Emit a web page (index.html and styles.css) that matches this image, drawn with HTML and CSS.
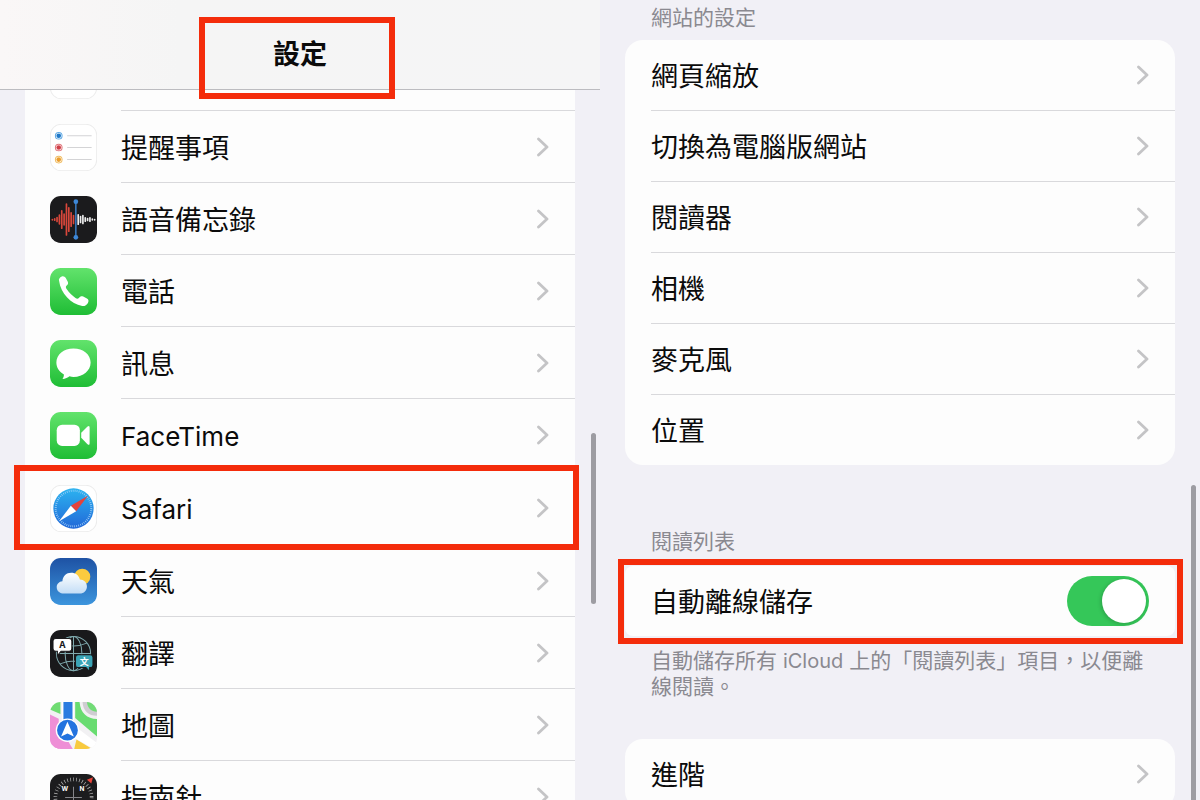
FILE: index.html
```html
<!DOCTYPE html>
<html lang="zh-Hant">

<head>
    <meta charset="UTF-8" />
    <meta name="viewport" content="width=device-width, initial-scale=1.0" />
    <title>設定</title>
    <link rel="stylesheet" href="styles.css">
</head>

<body>
    <svg class="defs" aria-hidden="true">
        <defs>
            <linearGradient id="green" x1="0" y1="0" x2="0" y2="1">
                <stop offset="0" stop-color="#62e36c" />
                <stop offset="1" stop-color="#1fbd35" />
            </linearGradient>
            <linearGradient id="sky" x1="0" y1="0" x2="0" y2="1">
                <stop offset="0" stop-color="#1e52a4" />
                <stop offset="1" stop-color="#3c95dd" />
            </linearGradient>
            <linearGradient id="dial" x1="0" y1="0" x2="0" y2="1">
                <stop offset="0" stop-color="#2cb3f0" />
                <stop offset="1" stop-color="#2168d8" />
            </linearGradient>
            <linearGradient id="cloud" x1="0" y1="0" x2="0" y2="1">
                <stop offset="0" stop-color="#ffffff" />
                <stop offset="1" stop-color="#c3ddf6" />
            </linearGradient>
            <clipPath id="tile"><rect width="140" height="140" rx="32" /></clipPath>
        </defs>
        <symbol id="chevron" viewBox="0 0 12 20">
            <path d="M1.5 2 L10 10 L1.5 18" fill="none" stroke="#c4c4c6" stroke-width="2.8" stroke-linecap="round" stroke-linejoin="round" />
        </symbol>
    </svg>

    <main class="screens">
        <section class="screen">
            <header class="navbar">
                <h1 class="title marked">設定</h1>
            </header>
            <nav class="app-list">
                <a class="app-row" href="#" aria-label="備忘錄">
                    <svg class="icon" viewBox="0 0 140 140"><rect x="1" y="1" width="138" height="138" rx="32" fill="#fff" stroke="#ececec" stroke-width="3" /></svg>
                    <span class="cell"></span>
                </a>
                <a class="app-row" href="#">
                    <svg class="icon" viewBox="0 0 140 140">
                        <rect x="1" y="1" width="138" height="138" rx="32" fill="#fff" stroke="#ececec" stroke-width="3" />
                        <g fill="none" stroke-width="3">
                            <circle cx="26" cy="35" r="10" stroke="#5fa9e4" />
                            <circle cx="26" cy="70" r="10" stroke="#e0787d" />
                            <circle cx="26" cy="106" r="10" stroke="#f0bd62" />
                        </g>
                        <circle cx="26" cy="35" r="7" fill="#1e78c8" />
                        <circle cx="26" cy="70" r="7" fill="#d03f48" />
                        <circle cx="26" cy="106" r="7" fill="#eb9e2e" />
                        <path d="M51 35H124M51 70H124M51 106H124" stroke="#d4d4d6" stroke-width="3" />
                    </svg>
                    <span class="cell"><span class="label">提醒事項</span><svg class="chevron"><use href="#chevron" /></svg></span>
                </a>
                <a class="app-row" href="#">
                    <svg class="icon" viewBox="0 0 140 140">
                        <rect width="140" height="140" rx="32" fill="#1b1b1d" />
                        <g stroke-width="5" stroke-linecap="round">
                            <path d="M7 70V71M14 68V72M21 64V76M28 57V83M35 44V96M42 54V86M49 24V116M56 35V105M63 50V90M70 58V82" stroke="#d9473b" />
                            <path d="M84 56V84M91 61V79M98 58V82M105 65V75M112 67V73M119 65V75M126 69V71M133 70V71" stroke="#eee" />
                        </g>
                        <path d="M77 17V123" stroke="#3d88d8" stroke-width="4" />
                        <circle cx="77" cy="17" r="7" fill="#3d88d8" />
                        <circle cx="77" cy="123" r="7" fill="#3d88d8" />
                    </svg>
                    <span class="cell"><span class="label">語音備忘錄</span><svg class="chevron"><use href="#chevron" /></svg></span>
                </a>
                <a class="app-row" href="#">
                    <svg class="icon" viewBox="0 0 140 140">
                        <rect width="140" height="140" rx="32" fill="url(#green)" />
                        <path d="M27 38C25 33 29 28 35 25C40 23 44 25 47 30L53 41C55 46 54 49 49 53C46 56 47 59 50 63C57 73 66 82 76 89C80 92 83 92 86 89C90 84 94 83 99 85L110 91C115 94 116 98 113 104C109 111 103 114 96 113C62 107 32 76 27 38Z" fill="#fff" />
                    </svg>
                    <span class="cell"><span class="label">電話</span><svg class="chevron"><use href="#chevron" /></svg></span>
                </a>
                <a class="app-row" href="#">
                    <svg class="icon" viewBox="0 0 140 140">
                        <rect width="140" height="140" rx="32" fill="url(#green)" />
                        <path d="M70 25C41 25 19 43 19 67C19 82 27 94 41 102C42 108 40 112 37 116C46 116 53 112 58 108C62 109 66 110 70 110C99 110 121 91 121 67C121 43 99 25 70 25Z" fill="#fff" />
                    </svg>
                    <span class="cell"><span class="label">訊息</span><svg class="chevron"><use href="#chevron" /></svg></span>
                </a>
                <a class="app-row" href="#">
                    <svg class="icon" viewBox="0 0 140 140">
                        <rect width="140" height="140" rx="32" fill="url(#green)" />
                        <rect x="20" y="38" width="69" height="63" rx="16" fill="#fff" />
                        <path d="M93 62L111 44Q118 38 118 46V93Q118 101 111 95L93 77Z" fill="#fff" />
                    </svg>
                    <span class="cell"><span class="label latin">FaceTime</span><svg class="chevron"><use href="#chevron" /></svg></span>
                </a>
                <a class="app-row app-row-marked marked" href="#">
                    <svg class="icon" viewBox="0 0 140 140">
                        <rect x="1" y="1" width="138" height="138" rx="32" fill="#fff" stroke="#ececec" stroke-width="3" />
                        <circle cx="70" cy="70" r="60" fill="url(#dial)" />
                        <circle cx="70" cy="70" r="53" fill="none" stroke="#a9d4f8" stroke-width="6" stroke-dasharray="2 4" />
                        <path d="M113 32L62 62L78 78Z" fill="#e5423c" />
                        <path d="M27 108L62 62L78 78Z" fill="#fff" />
                    </svg>
                    <span class="cell"><span class="label latin">Safari</span><svg class="chevron"><use href="#chevron" /></svg></span>
                </a>
                <a class="app-row" href="#">
                    <svg class="icon" viewBox="0 0 140 140">
                        <rect width="140" height="140" rx="32" fill="url(#sky)" />
                        <circle cx="96" cy="56" r="24" fill="#fbcb3f" />
                        <path d="M42 106C29 106 20 98 20 87C20 77 27 70 37 69C38 54 49 44 63 44C76 44 86 52 89 64C101 64 110 73 110 85C110 97 101 106 89 106Z" fill="url(#cloud)" />
                    </svg>
                    <span class="cell"><span class="label">天氣</span><svg class="chevron"><use href="#chevron" /></svg></span>
                </a>
                <a class="app-row" href="#">
                    <svg class="icon" viewBox="0 0 140 140">
                        <rect width="140" height="140" rx="32" fill="#19191b" />
                        <g fill="none" stroke="#7fa9ad" stroke-width="3">
                            <circle cx="70" cy="70" r="51" />
                            <ellipse cx="70" cy="70" rx="25" ry="51" />
                            <path d="M70 19V121M19 70H121M30 39Q70 56 110 39M30 101Q70 84 110 101" />
                        </g>
                        <path d="M17 25H57Q65 25 65 33V55Q65 63 57 63H33L22 76V63H17Q9 63 9 55V33Q9 25 17 25Z" fill="#fff" stroke="#19191b" stroke-width="3" />
                        <path d="M84 74H120Q128 74 128 82V104Q128 112 120 112H118V124L107 112H84Q76 112 76 104V82Q76 74 84 74Z" fill="#3ba4b5" stroke="#19191b" stroke-width="3" />
                        <text class="glyph glyph-dark" x="37" y="54">A</text>
                        <text class="glyph glyph-light" x="102" y="103">文</text>
                    </svg>
                    <span class="cell"><span class="label">翻譯</span><svg class="chevron"><use href="#chevron" /></svg></span>
                </a>
                <a class="app-row" href="#">
                    <svg class="icon" viewBox="0 0 140 140">
                        <g clip-path="url(#tile)">
                            <rect width="140" height="140" fill="#f2f1f3" />
                            <path d="M0 0H31V36L0 22Z" fill="#6fdc72" />
                            <path d="M0 37L26 50V140H0Z" fill="#ee8fd6" />
                            <path d="M0 108L50 110L68 140H0Z" fill="#ee8fd6" />
                            <path d="M75 0H88C91 34 110 49 140 51V103L75 48Z" fill="#68dc70" />
                            <path d="M97 0H140V41C115 41 98 27 97 0Z" fill="#cfcdd2" />
                            <path d="M110 0H140V29C123 28 112 19 110 0Z" fill="#71dc76" />
                            <path d="M79 112L126 140H72Z" fill="#f8ca3f" />
                            <path d="M87 82L140 122V140H131L76 109Z" fill="#fff" />
                            <path d="M35 0H72V65H35Z" fill="#fff" />
                            <path d="M40 0H67V65H40Z" fill="#2b7ce0" />
                        </g>
                        <circle cx="52" cy="84" r="33" fill="#2373df" stroke="#fff" stroke-width="4" />
                        <path d="M52 59L71 103L52 94L33 103Z" fill="#fff" />
                    </svg>
                    <span class="cell"><span class="label">地圖</span><svg class="chevron"><use href="#chevron" /></svg></span>
                </a>
                <a class="app-row" href="#">
                    <svg class="icon" viewBox="0 0 140 140">
                        <rect width="140" height="140" rx="32" fill="#1c1c1e" />
                        <circle cx="70" cy="70" r="54" fill="none" stroke="#b8b8b8" stroke-width="11" stroke-dasharray="2 7" />
                        <path d="M70 38V102M45 70H95" stroke="#85858a" stroke-width="3" />
                        <path d="M128 10L123 28L110 17Z" fill="#ea453b" />
                        <text class="mark" x="44" y="50">W</text>
                        <text class="mark" x="95" y="50">N</text>
                    </svg>
                    <span class="cell"><span class="label">指南針</span><svg class="chevron"><use href="#chevron" /></svg></span>
                </a>
            </nav>
            <div class="scrollbar scrollbar-left"></div>
        </section>

        <section class="screen">
            <h2 class="caption">網站的設定</h2>
            <nav class="group">
                <a class="cell" href="#"><span class="label">網頁縮放</span><svg class="chevron"><use href="#chevron" /></svg></a>
                <a class="cell" href="#"><span class="label">切換為電腦版網站</span><svg class="chevron"><use href="#chevron" /></svg></a>
                <a class="cell" href="#"><span class="label">閱讀器</span><svg class="chevron"><use href="#chevron" /></svg></a>
                <a class="cell" href="#"><span class="label">相機</span><svg class="chevron"><use href="#chevron" /></svg></a>
                <a class="cell" href="#"><span class="label">麥克風</span><svg class="chevron"><use href="#chevron" /></svg></a>
                <a class="cell" href="#"><span class="label">位置</span><svg class="chevron"><use href="#chevron" /></svg></a>
            </nav>

            <h2 class="caption caption-reading">閱讀列表</h2>
            <div class="group group-marked marked">
                <div class="cell">
                    <label class="label" for="autoSave">自動離線儲存</label>
                    <input type="checkbox" class="switch" id="autoSave" name="autoSave" checked />
                </div>
            </div>
            <p class="note">自動儲存所有 <span class="note-latin">iCloud</span> 上的「閱讀列表」項目，以便離線閱讀。</p>

            <nav class="group">
                <a class="cell" href="#"><span class="label">進階</span><svg class="chevron"><use href="#chevron" /></svg></a>
            </nav>
            <div class="scrollbar scrollbar-right"></div>
        </section>
    </main>
</body>

</html>
```
FILE: styles.css
```css
* {
    box-sizing: border-box;
}

body {
    margin: 0;
    font-family: Inter, "Noto Sans CJK TC", sans-serif;
    font-size: 27px;
    color: #0b0b0b;
    background-color: #f1f0f6;
}

a {
    color: inherit;
    text-decoration: none;
}

.defs {
    position: absolute;
    width: 0;
    height: 0;
}

.screens {
    display: grid;
    grid-template-columns: 1fr 1fr;
    height: 100vh;
}

.screen {
    position: relative;
    overflow: hidden;
}

/* red frames over the steps to follow */
.marked {
    position: relative;
}

.marked::after {
    content: "";
    position: absolute;
    border: 6px solid #f42c0b;
    pointer-events: none;
    z-index: 3;
}

.navbar {
    position: relative;
    z-index: 2;
    display: flex;
    justify-content: center;
    align-items: center;
    height: 90px;
    padding-top: 20px;
    border-bottom: 1px solid #bcbcc0;
    background: linear-gradient(to right, #faf7f7, #f5f5f5 30%, #f5f5f6);
}

.title {
    margin: 0;
    font-size: 27px;
    font-weight: 700;
    line-height: 40px;
}

.title::after {
    inset: -18px -68px -24px -74px;
}

.app-list {
    margin: -51px 25px 0;
    background-color: #fdfdfd;
}

.app-row {
    display: flex;
    align-items: center;
    gap: 24px;
    height: 72px;
    padding-left: 25px;
}

.app-row .cell {
    flex: 1;
    height: 100%;
    border-bottom: 1px solid #d9d9dc;
}

.app-row-marked {
    height: 74px;
}

.app-row-marked::after {
    inset: -6px -4px -5px -11px;
}

.icon {
    flex: none;
    width: 47px;
    height: 47px;
}

.glyph {
    font-size: 27px;
    font-weight: 700;
    text-anchor: middle;
}

.glyph-dark {
    fill: #19191b;
}

.glyph-light {
    fill: #fff;
}

.mark {
    font-size: 19px;
    font-weight: 700;
    text-anchor: middle;
    fill: #fff;
}

.cell {
    display: flex;
    justify-content: space-between;
    align-items: center;
    padding-right: 26px;
    line-height: 40px;
}

.label {
    padding-top: 4px;
}

.latin {
    font-size: 26px;
}

.chevron {
    flex: none;
    width: 12px;
    height: 20px;
}

.caption {
    margin: 0;
    padding: 4px 51px 8px;
    font-size: 21px;
    font-weight: 400;
    line-height: 28px;
    color: #8a8990;
}

.caption-reading {
    padding-top: 63px;
    padding-bottom: 10px;
}

.group {
    margin: 0 25px;
    padding-left: 26px;
    border-radius: 18px;
    background-color: #fdfdfd;
}

.group .cell {
    height: 71px;
    border-bottom: 1px solid #d9d9dc;
}

.group .cell:last-child {
    height: 70px;
    border-bottom: none;
}

.group-marked {
    border-radius: 8px;
}

.group-marked::after {
    inset: -7px -8px -8px -7px;
}

.switch {
    appearance: none;
    display: flex;
    justify-content: flex-end;
    width: 82px;
    height: 50px;
    margin: 0;
    padding: 3px;
    border-radius: 25px;
    background-color: #35c759;
}

.switch::before {
    content: "";
    width: 44px;
    height: 44px;
    border-radius: 50%;
    background-color: #fff;
    box-shadow: -1px 1px 4px rgba(0, 0, 0, 0.2);
}

.switch:not(:checked) {
    justify-content: flex-start;
    background-color: #e9e9eb;
}

.note {
    margin: 0;
    padding: 12px 51px 39px;
    font-size: 21px;
    line-height: 26px;
    color: #8a8990;
}

.note-latin {
    font-size: 20px;
}

.scrollbar {
    position: absolute;
    width: 5px;
    border-radius: 3px;
    background-color: #9d9ca2;
}

.scrollbar-left {
    top: 433px;
    right: 4px;
    height: 171px;
}

.scrollbar-right {
    top: 485px;
    right: 4px;
    height: 340px;
}
```
